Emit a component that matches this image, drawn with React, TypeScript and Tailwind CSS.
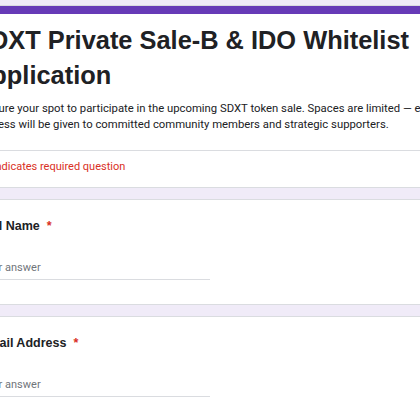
import React from "react";

const Question = ({ label }: { label: string }) => {
  return (
    <div className="mt-[11px] rounded-lg border border-[#dadce0] bg-white pl-[24px] pt-[17px] pb-[24px]">
      <p className="font-['Liberation_Sans',Arial,sans-serif] text-[12.5px] leading-[18px] font-bold text-[#202124]">
        {label}
        <span className="ml-[7px] text-[#d93025]">*</span>
      </p>
      <div className="mt-[25px] w-[230px] border-b border-[#dadce0] pb-[3px]">
        <p className="text-[11px] leading-[16px] text-[#70757a]">Your answer</p>
      </div>
    </div>
  );
};

const App = () => {
  return (
    <div className="min-h-screen w-[420px] overflow-hidden bg-[#f0ebf8] pt-[5px] font-['Roboto',sans-serif]">
      <div className="-ml-[45px] w-[525px]">
        <div className="overflow-hidden rounded-lg border border-[#dadce0] bg-white">
          <div className="h-[8px] bg-[#673ab7]" />
          <div className="pl-[24px] pr-[30px] pt-[9px] pb-[18px]">
            <h1 className="-ml-[7px] font-['Liberation_Sans',Arial,sans-serif] text-[25.4px] leading-[35px] font-bold text-[#202124]">
              SDXT Private Sale-B &amp; IDO Whitelist Application
            </h1>
            <p className="mt-[8px] whitespace-nowrap text-[11.3px] leading-[15.5px] text-[#202124]">
              Secure your spot to participate in the upcoming SDXT token sale. Spaces are limited — early
              <br />
              access will be given to committed community members and strategic supporters.
            </p>
          </div>
          <div className="border-t border-[#dadce0] pl-[29px] pt-[8px] pb-[12px]">
            <p className="text-[11px] leading-[16px] text-[#d93025]">* Indicates required question</p>
          </div>
        </div>
        <Question label="Full Name" />
        <Question label="Email Address" />
      </div>
    </div>
  );
};

export default App;
